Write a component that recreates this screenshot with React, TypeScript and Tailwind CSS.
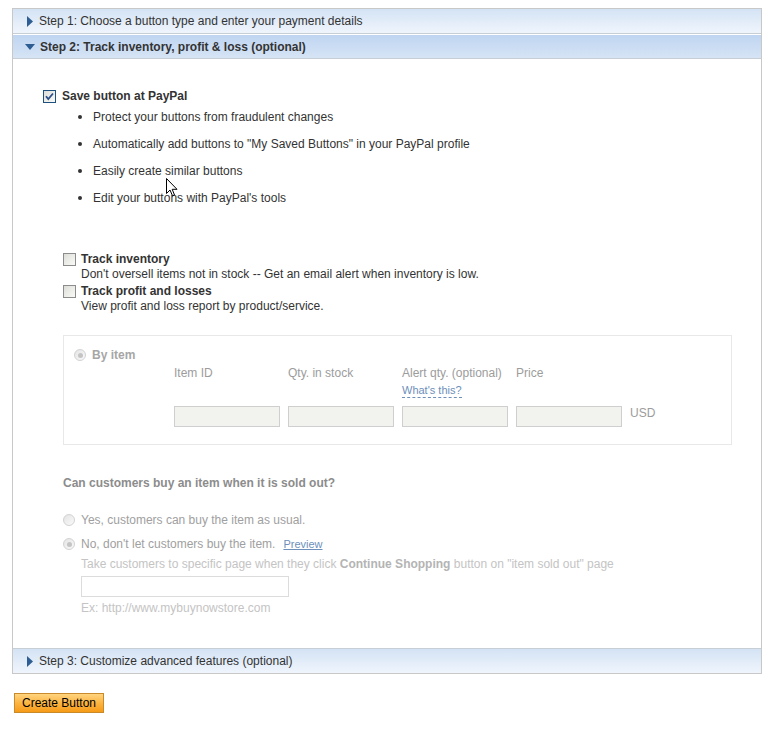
import React from "react";

const font = { fontFamily: '"Liberation Sans", Arial, sans-serif' };

function RightTri() {
  return (
    <svg width="6" height="11" viewBox="0 0 6 11" className="shrink-0">
      <path d="M0 0 L6 5.5 L0 11 Z" fill="#2d5d92" />
    </svg>
  );
}

function DownTri() {
  return (
    <svg width="10" height="6" viewBox="0 0 10 6" className="shrink-0">
      <path d="M0 0 L10 0 L5 6 Z" fill="#2d5d92" />
    </svg>
  );
}

function Checkbox({ checked }: { checked?: boolean }) {
  return (
    <svg width="13" height="13" viewBox="0 0 13 13" className="shrink-0">
      <defs>
        <linearGradient id="cbg" x1="0" y1="0" x2="1" y2="1">
          <stop offset="0" stopColor="#dcdcd7" />
          <stop offset="1" stopColor="#fbfbf9" />
        </linearGradient>
      </defs>
      <rect x="0.5" y="0.5" width="12" height="12" fill="url(#cbg)" stroke={checked ? "#1c5180" : "#8c8c8c"} />
      {checked && <path d="M3 6.2 L5.3 9 L10 3.5" fill="none" stroke="#2b4f8a" strokeWidth="1.8" />}
    </svg>
  );
}

function Radio({ checked }: { checked?: boolean }) {
  return (
    <span className="w-[12px] h-[12px] rounded-full border border-[#d2d2d2] bg-gradient-to-br from-[#e4e4e4] to-[#fafafa] flex items-center justify-center shrink-0">
      {checked && <span className="w-[5px] h-[5px] rounded-full bg-[#c4c4c4]" />}
    </span>
  );
}

function Bullet({ children }: { children: React.ReactNode }) {
  return (
    <li className="flex items-center h-[14px] leading-[14px]">
      <span className="w-[4px] h-[4px] rounded-full bg-[#333] ml-[35px] mr-[11px]" />
      {children}
    </li>
  );
}

export default function App() {
  return (
    <div className="w-[772px] h-[750px] bg-white pt-[8px] pl-[12px] text-[12px] text-[#333] relative" style={font}>
      <div className="w-[750px] border border-[#c8c8c8]">
        {/* Step 1 */}
        <div className="h-[25px] flex items-center gap-[6px] pl-[14px] bg-gradient-to-b from-[#d4e3f5] to-[#f0f5fc] border-b border-[#c8ced6]">
          <RightTri />
          <span>Step 1: Choose a button type and enter your payment details</span>
        </div>
        {/* Step 2 */}
        <div className="h-[25px] flex items-center gap-[5px] pl-[12px] bg-gradient-to-b from-[#bfd5f1] to-[#d6e4f5] border-t border-white border-b border-b-[#c8ced6]">
          <DownTri />
          <span className="font-bold">Step 2: Track inventory, profit &amp; loss (optional)</span>
        </div>

        {/* Content */}
        <div className="h-[589px] pt-[30px] pl-[30px]">
          <div className="flex items-center gap-[6px] h-[14px]">
            <Checkbox checked />
            <span className="font-bold">Save button at PayPal</span>
          </div>
          <ul className="mt-[7px] flex flex-col gap-[13px]">
            <Bullet>Protect your buttons from fraudulent changes</Bullet>
            <Bullet>Automatically add buttons to "My Saved Buttons" in your PayPal profile</Bullet>
            <Bullet>Easily create similar buttons</Bullet>
            <Bullet>Edit your buttons with PayPal's tools</Bullet>
          </ul>

          <div className="ml-[20px] mt-[47px]">
            <div className="flex items-center gap-[5px] h-[14px]">
              <Checkbox />
              <span className="font-bold">Track inventory</span>
            </div>
            <div className="pl-[18px] h-[15px] leading-[15px] mt-[1px]">
              Don't oversell items not in stock -- Get an email alert when inventory is low.
            </div>
            <div className="flex items-center gap-[5px] h-[14px] mt-[2px]">
              <Checkbox />
              <span className="font-bold">Track profit and losses</span>
            </div>
            <div className="pl-[18px] h-[15px] leading-[15px] mt-[1px]">
              View profit and loss report by product/service.
            </div>

            {/* By item box */}
            <div className="mt-[21px] w-[669px] h-[110px] border border-[#e8e8e8] pt-[12px] pl-[10px]">
              <div className="flex items-center gap-[6px] h-[14px]">
                <Radio checked />
                <span className="font-bold text-[#a6a6a6]">By item</span>
              </div>
              <div className="pl-[100px] text-[#9c9c9c]">
                <div className="grid grid-cols-[106px_106px_106px_106px] gap-x-[8px] mt-[4px] leading-[14px]">
                  <span>Item ID</span>
                  <span>Qty. in stock</span>
                  <div className="flex flex-col items-start">
                    <span>Alert qty. (optional)</span>
                    <span className="mt-[4px] text-[11px] leading-[13px] text-[#6d8fba] border-b border-dashed border-[#6d8fba]">What's this?</span>
                  </div>
                  <span>Price</span>
                </div>
                <div className="flex items-center gap-[8px] mt-[8px]">
                  <div className="w-[106px] h-[21px] bg-[#f2f2ef] border border-[#cfcfcf]" />
                  <div className="w-[106px] h-[21px] bg-[#f2f2ef] border border-[#cfcfcf]" />
                  <div className="w-[106px] h-[21px] bg-[#f2f2ef] border border-[#cfcfcf]" />
                  <div className="w-[106px] h-[21px] bg-[#f2f2ef] border border-[#cfcfcf]" />
                  <span className="-mt-[7px]">USD</span>
                </div>
              </div>
            </div>

            <div className="mt-[31px] font-bold text-[#8c8c8c] h-[14px] leading-[14px]">
              Can customers buy an item when it is sold out?
            </div>
            <div className="mt-[23px] flex items-center gap-[6px] h-[14px] text-[#a0a0a0]">
              <Radio />
              <span>Yes, customers can buy the item as usual.</span>
            </div>
            <div className="mt-[10px] flex items-center gap-[6px] h-[14px] text-[#a0a0a0]">
              <Radio checked />
              <span>No, don't let customers buy the item.</span>
              <span className="ml-[2px] text-[11px] text-[#6d8fba] underline">Preview</span>
            </div>
            <div className="pl-[18px] text-[#c4c4c4]">
              <div className="mt-[6px] h-[14px] leading-[14px]">
                Take customers to specific page when they click <span className="font-bold text-[#b4b4b4]">Continue Shopping</span> button on "item sold out" page
              </div>
              <div className="mt-[5px] w-[208px] h-[21px] border border-[#dcdcdc]" />
              <div className="mt-[4px] h-[14px] leading-[14px]">Ex: http://www.mybuynowstore.com</div>
            </div>
          </div>
        </div>

        {/* Step 3 */}
        <div className="h-[25px] flex items-center gap-[6px] pl-[14px] bg-gradient-to-b from-[#d4e3f5] to-[#f0f5fc] border-t border-[#c8ced6]">
          <RightTri />
          <span>Step 3: Customize advanced features (optional)</span>
        </div>
      </div>

      <button className="mt-[19px] ml-[2px] w-[90px] h-[20px] border border-[#c88a2b] bg-gradient-to-b from-[#ffd47e] via-[#fbb540] to-[#f69a13] text-[12px] text-black leading-[18px]" style={font}>
        Create Button
      </button>

      {/* mouse pointer */}
      <svg className="absolute left-[166px] top-[178px]" width="12" height="19" viewBox="0 0 12 19">
        <path d="M0.5 0.5 L0.5 15.5 L4 12 L6.5 17.8 L8.5 17 L6.2 11.3 L11 11.3 Z" fill="white" stroke="black" strokeWidth="1" />
      </svg>
    </div>
  );
}
